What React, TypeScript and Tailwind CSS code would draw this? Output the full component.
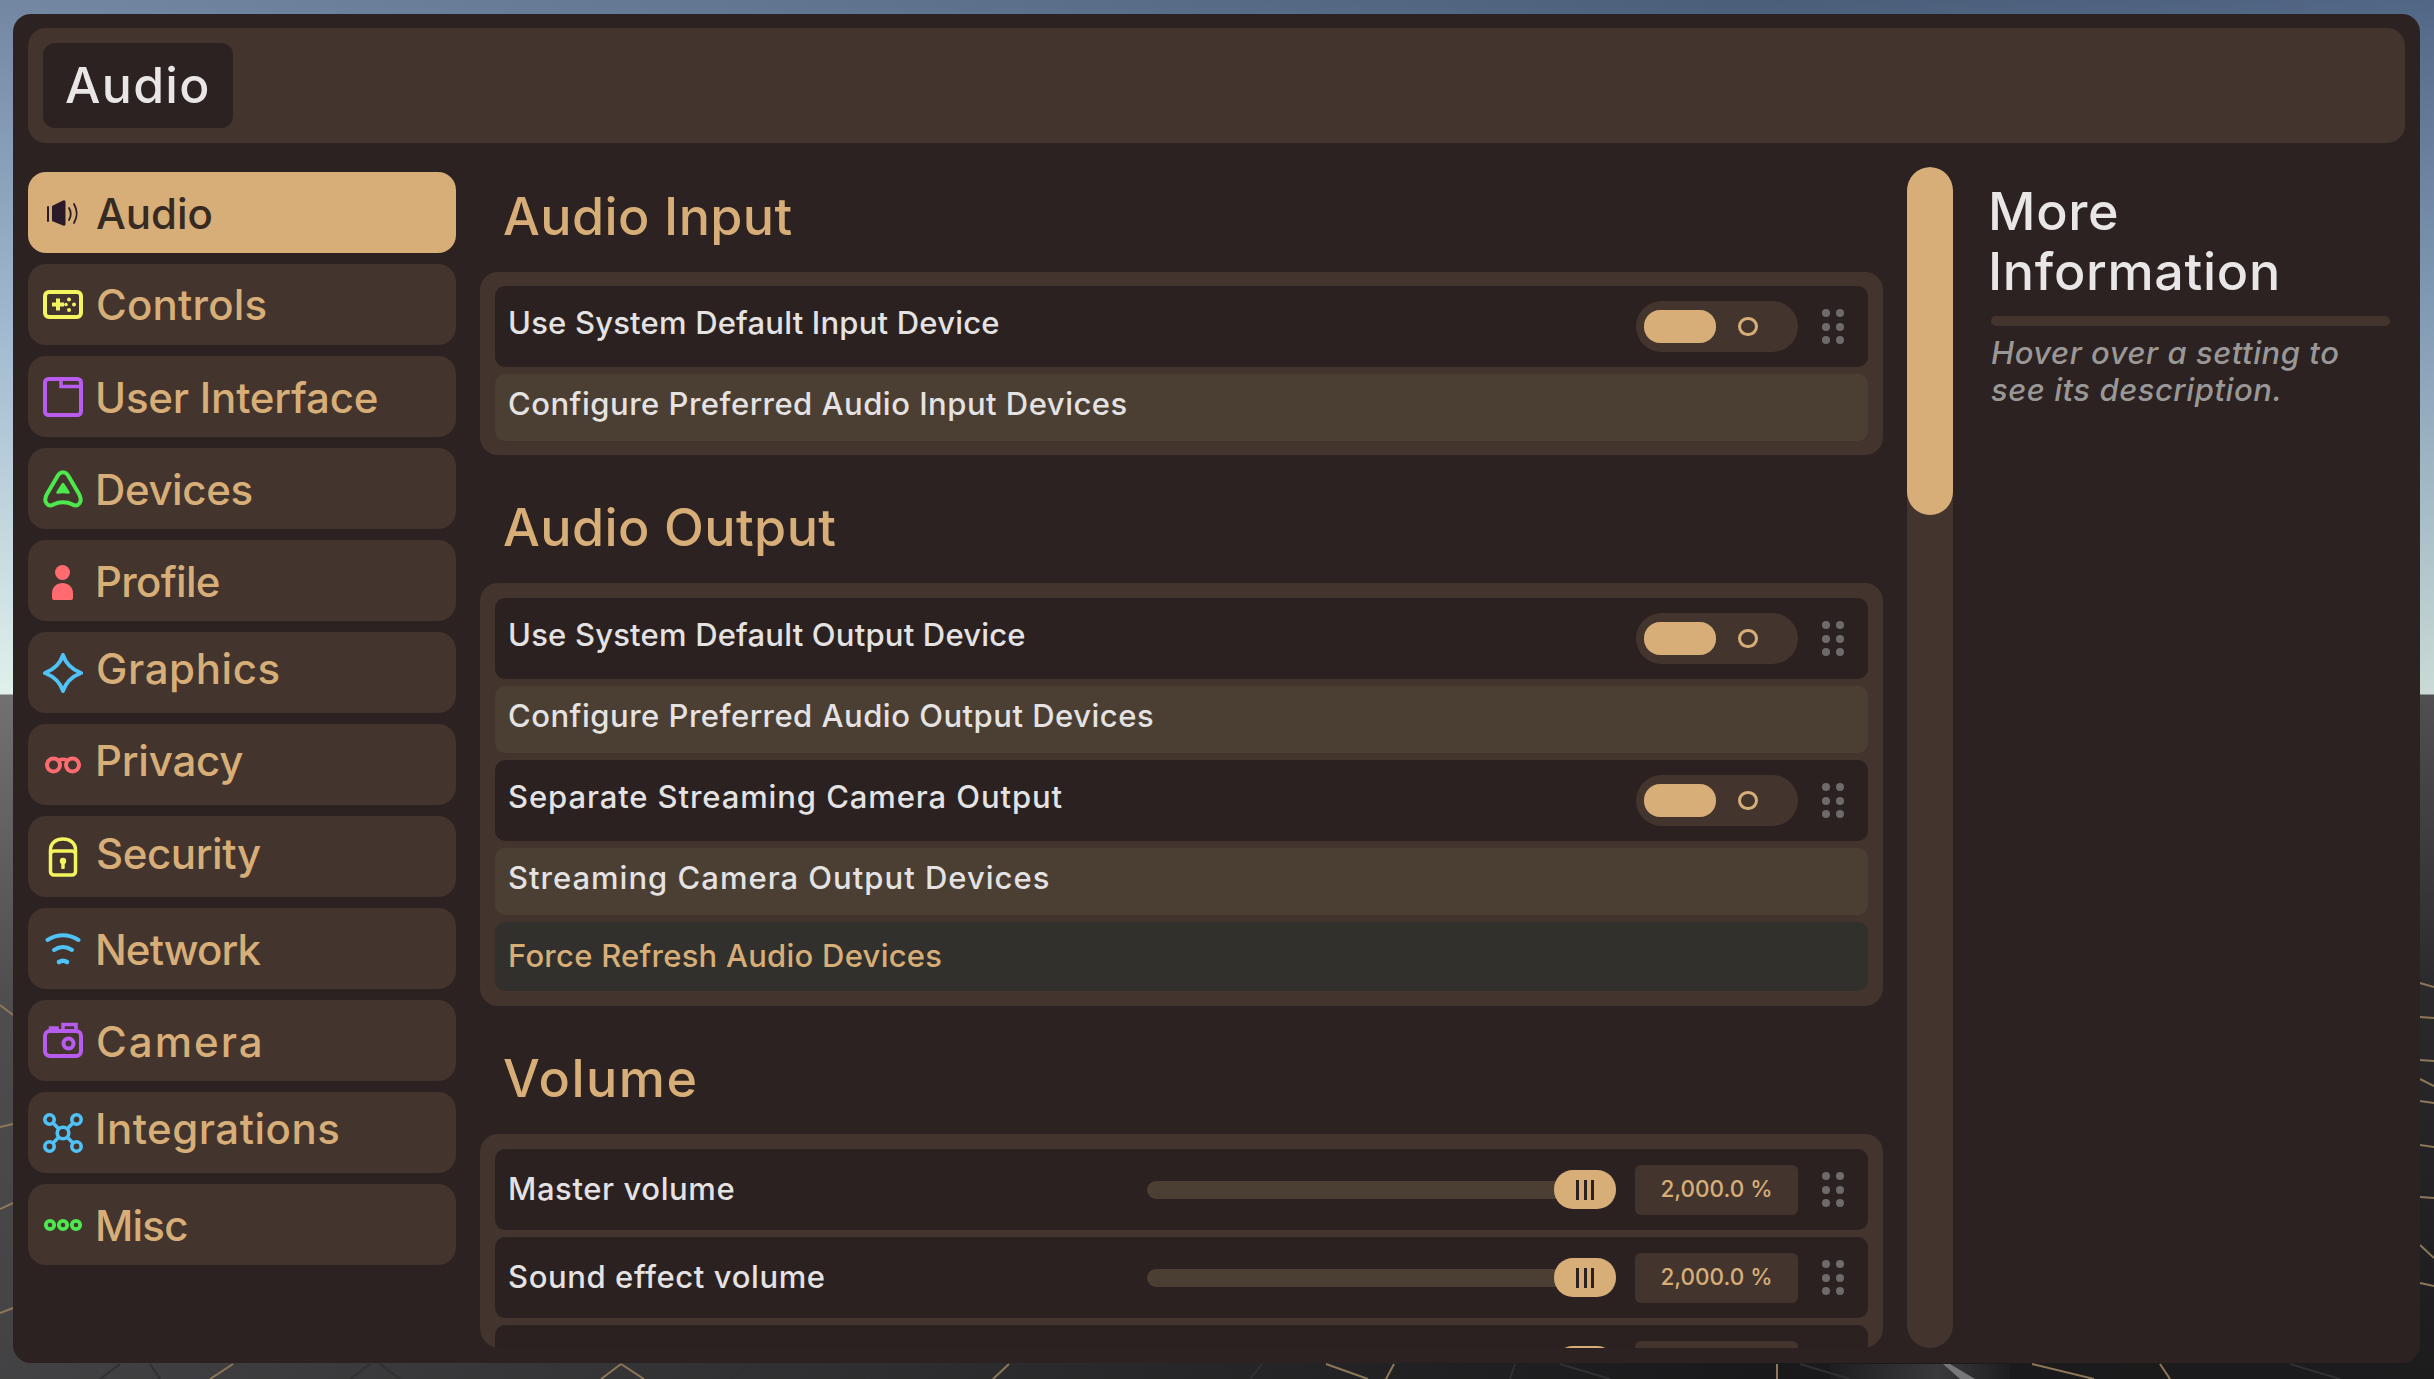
import type { ReactNode } from 'react'

function Speaker() {
  return (
    <svg viewBox="0 0 40 40" className="h-10 w-10 shrink-0" fill="none">
      <rect x="4" y="13" width="2" height="16" rx="1" fill="#2b1a28" />
      <path d="M9 13 L20 7.5 Q22.5 6.5 22.5 9 V31 Q22.5 33.5 20 32.5 L9 28Z" fill="#2b1a28" />
      <path d="M26 15 Q29.5 21 26 27" stroke="#2b1a28" strokeWidth="1.8" strokeLinecap="round" />
      <path d="M31 11 Q36.5 20.5 31 30" stroke="#2b1a28" strokeWidth="1.8" strokeLinecap="round" />
    </svg>
  )
}

function Gamepad() {
  return (
    <svg viewBox="0 0 40 40" className="h-10 w-10 shrink-0" fill="none">
      <rect x="2" y="7" width="36" height="25" rx="4" stroke="#f4f45e" strokeWidth="4" />
      <path d="M15 13.5 V25.5 M9 19.5 H21" stroke="#f4f45e" strokeWidth="4" />
      <circle cx="26" cy="14.5" r="2" fill="#f4f45e" />
      <circle cx="26" cy="25" r="2" fill="#f4f45e" />
      <circle cx="23" cy="19.5" r="1.8" fill="#f4f45e" />
      <circle cx="31" cy="19.5" r="2" fill="#f4f45e" />
    </svg>
  )
}

function WindowIcon() {
  return (
    <svg viewBox="0 0 40 40" className="h-10 w-10 shrink-0" fill="none">
      <rect x="2" y="2" width="36" height="36" rx="3.5" stroke="#b85cf0" strokeWidth="4" />
      <path d="M18 2 V9.5 H38" stroke="#b85cf0" strokeWidth="3.5" />
    </svg>
  )
}

function DevicesIcon() {
  return (
    <svg viewBox="0 0 40 40" className="h-10 w-10 shrink-0" fill="none">
      <path
        d="M14 8 C17 1.5 23 1.5 26 8 L36 25 C40.5 33 35 38.5 29.5 35.5 C24 32.5 16 32.5 10.5 35.5 C5 38.5 -0.5 33 4 25Z"
        stroke="#4de84d"
        strokeWidth="4"
        strokeLinejoin="round"
      />
      <path d="M20 15 L25.5 23.5 Q20 22.5 14.5 23.5Z" fill="#4de84d" stroke="#4de84d" strokeWidth="2.5" strokeLinejoin="round" />
    </svg>
  )
}

function ProfileIcon() {
  return (
    <svg viewBox="0 0 40 40" className="h-10 w-10 shrink-0" fill="#ff6b6e">
      <circle cx="19.5" cy="11.5" r="7.5" />
      <path d="M9 37 V32 C9 26 14 22 19.5 22 C25 22 30 26 30 32 V37 Q30 39 28 39 H11 Q9 39 9 37Z" />
    </svg>
  )
}

function SparkIcon() {
  return (
    <svg viewBox="0 0 40 40" className="h-10 w-10 shrink-0" fill="none">
      <path
        d="M20 2 Q24 14.5 38 20 Q24 25.5 20 38 Q16 25.5 2 20 Q16 14.5 20 2Z"
        stroke="#4fc3f7"
        strokeWidth="4"
        strokeLinejoin="round"
      />
    </svg>
  )
}

function GlassesIcon() {
  return (
    <svg viewBox="0 0 40 40" className="h-10 w-10 shrink-0" fill="none">
      <circle cx="10.5" cy="20" r="6.5" stroke="#ff6b6e" strokeWidth="4" />
      <circle cx="29.5" cy="20" r="6.5" stroke="#ff6b6e" strokeWidth="4" />
      <path d="M15 15.5 Q20 13 25 15.5" stroke="#ff6b6e" strokeWidth="3.5" />
    </svg>
  )
}

function LockIcon() {
  return (
    <svg viewBox="0 0 40 40" className="h-10 w-10 shrink-0" fill="none">
      <rect x="7.5" y="14" width="25" height="24" rx="3.5" stroke="#f4f45e" strokeWidth="3.5" />
      <path d="M7.5 17 V13 C7.5 6 13 2 20 2 C27 2 32.5 6 32.5 13 V17" stroke="#f4f45e" strokeWidth="3.5" />
      <circle cx="20" cy="24" r="3.2" fill="#f4f45e" />
      <rect x="18.25" y="24" width="3.5" height="8" rx="1" fill="#f4f45e" />
    </svg>
  )
}

function WifiIcon() {
  return (
    <svg viewBox="0 0 40 40" className="h-10 w-10 shrink-0" fill="none" stroke="#4fc3f7" strokeLinecap="round" strokeWidth="4">
      <path d="M4.5 11 Q20 1.5 35.5 11" />
      <path d="M11 21 Q20 15 29 21" />
      <path d="M16 33 Q20 30.5 24 33" strokeWidth="4.5" />
    </svg>
  )
}

function CameraIcon() {
  return (
    <svg viewBox="0 0 40 40" className="h-10 w-10 shrink-0" fill="none" stroke="#b85cf0">
      <rect x="2" y="10" width="36" height="25" rx="5" strokeWidth="4" />
      <path d="M7.5 9 V7 H14 V9" strokeWidth="3.5" />
      <path d="M20 8 V3.5 H33 V8" strokeWidth="3.5" />
      <circle cx="25.5" cy="22.5" r="5" strokeWidth="4" />
    </svg>
  )
}

function NodesIcon() {
  return (
    <svg viewBox="0 0 40 40" className="h-10 w-10 shrink-0" fill="none" stroke="#4fc3f7" strokeWidth="3.6">
      <circle cx="6.5" cy="6.5" r="4.7" />
      <circle cx="33.5" cy="6.5" r="4.7" />
      <circle cx="6.5" cy="33.5" r="4.7" />
      <circle cx="33.5" cy="33.5" r="4.7" />
      <circle cx="20" cy="20" r="5.8" />
      <path d="M10 10 L15.5 15.5 M30 10 L24.5 15.5 M10 30 L15.5 24.5 M30 30 L24.5 24.5" />
    </svg>
  )
}

function MiscIcon() {
  return (
    <svg viewBox="0 0 40 40" className="h-10 w-10 shrink-0" fill="none" stroke="#4de84d" strokeWidth="3.8">
      <circle cx="7" cy="20" r="4.2" />
      <circle cx="20" cy="20" r="4.2" />
      <circle cx="33" cy="20" r="4.2" />
    </svg>
  )
}

// shift and tracking keep each label on the baseline and width of the original font
const categories: { label: string; icon: ReactNode; shift: string }[] = [
  { label: 'Audio', icon: <Speaker />, shift: 'mt-[3px]' },
  { label: 'Controls', icon: <Gamepad />, shift: 'mt-[1px] tracking-[0.2px]' },
  { label: 'User Interface', icon: <WindowIcon />, shift: 'mt-[3px] -ml-px tracking-[-0.2px]' },
  { label: 'Devices', icon: <DevicesIcon />, shift: 'mt-[3px] -ml-px tracking-[-0.4px]' },
  { label: 'Profile', icon: <ProfileIcon />, shift: 'mt-[3px] -ml-px tracking-[-0.7px]' },
  { label: 'Graphics', icon: <SparkIcon />, shift: 'mb-[7px] tracking-[0.6px]' },
  { label: 'Privacy', icon: <GlassesIcon />, shift: 'mb-[7px] -ml-px tracking-[-0.2px]' },
  { label: 'Security', icon: <LockIcon />, shift: 'mb-[5px] tracking-[-0.4px]' },
  { label: 'Network', icon: <WifiIcon />, shift: 'mt-[3px] -ml-px tracking-[-0.9px]' },
  { label: 'Camera', icon: <CameraIcon />, shift: 'mt-[2px] tracking-[2px]' },
  { label: 'Integrations', icon: <NodesIcon />, shift: 'mb-[7px] -ml-px tracking-[0.5px]' },
  { label: 'Misc', icon: <MiscIcon />, shift: 'mt-[3px] -ml-px tracking-[-0.8px]' },
]

function Backdrop() {
  // ground lines that show in the margin around the window
  const bright = [
    [233, 1364, 210, 1379],
    [621, 1364, 601, 1379],
    [621, 1364, 644, 1379],
    [1009, 1364, 993, 1379],
    [1326, 1364, 1368, 1379],
    [1394, 1364, 1386, 1379],
    [1777, 1364, 1777, 1379],
    [2032, 1364, 2094, 1379],
    [2160, 1364, 2170, 1379],
    [2420, 983, 2434, 987],
    [2420, 1017, 2434, 1018],
    [2420, 1060, 2434, 1061],
    [2420, 1079, 2434, 1086],
    [2420, 1101, 2434, 1103],
    [2420, 1145, 2434, 1147],
    [2420, 1197, 2434, 1198],
    [2420, 1245, 2434, 1258],
    [2420, 1283, 2434, 1286],
    [0, 1005, 13, 1015],
    [0, 1127, 13, 1124],
    [0, 1209, 13, 1203],
    [0, 1313, 13, 1308],
  ]
  const faint = [
    [100, 1379, 120, 1364],
    [160, 1379, 150, 1364],
    [350, 1379, 370, 1364],
    [400, 1379, 380, 1364],
    [730, 1379, 750, 1364],
    [870, 1379, 850, 1364],
    [1250, 1379, 1262, 1364],
    [1510, 1379, 1515, 1364],
    [1560, 1364, 1610, 1379],
    [1800, 1364, 1850, 1379],
    [2290, 1364, 2340, 1379],
  ]
  return (
    <svg className="absolute inset-0 h-full w-full" viewBox="0 0 2434 1379" fill="none">
      <defs>
        <linearGradient id="glint" x1="0" x2="1" y1="0" y2="0">
          <stop offset="0" stopColor="#1e1e20" />
          <stop offset="0.6" stopColor="#3a3a3c" />
          <stop offset="1" stopColor="#1e1e20" />
        </linearGradient>
      </defs>
      <rect x="1830" y="1364" width="180" height="15" fill="url(#glint)" />
      <path d="M1943 1364 L1950 1364 L1975 1379 L1960 1379Z" fill="#77777a" />
      {bright.map((l, i) => (
        <line key={i} x1={l[0]} y1={l[1]} x2={l[2]} y2={l[3]} stroke="#8d7757" strokeWidth="2" />
      ))}
      {faint.map((l, i) => (
        <line key={i} x1={l[0]} y1={l[1]} x2={l[2]} y2={l[3]} stroke="#303033" strokeWidth="2" />
      ))}
    </svg>
  )
}

function Grip() {
  return (
    <div className="grid w-[22px] shrink-0 grid-cols-2 gap-x-[6px] gap-y-[5.5px]">
      {[0, 1, 2, 3, 4, 5].map((n) => (
        <span key={n} className="h-2 w-2 rounded-full bg-[#6d6b6b]" />
      ))}
    </div>
  )
}

function Toggle() {
  return (
    <div className="flex h-[51px] w-[162px] shrink-0 items-center rounded-[26px] bg-[#43352e] pl-2">
      <span className="h-[33px] w-[72px] rounded-[16px] bg-[#d7ae78]" />
      <span className="ml-[22px] h-[19px] w-[20px] rounded-full border-[3px] border-[#d7ae78]" />
    </div>
  )
}

function ToggleRow({ label, tracking }: { label: string; tracking: string }) {
  return (
    <div className="flex h-[81px] items-center rounded-[10px] bg-[#2a2120] pr-6 pl-[13px]">
      <span className={`mb-[6px] flex-1 text-[31px] font-medium text-[#e4e2e2] ${tracking}`}>{label}</span>
      <Toggle />
      <div className="ml-6">
        <Grip />
      </div>
    </div>
  )
}

function ButtonRow({ label, tracking }: { label: string; tracking: string }) {
  return (
    <div className="flex h-[67px] items-center rounded-[10px] bg-[#4b3f33] pl-[13px]">
      <span className={`mb-[6px] text-[31px] font-medium text-[#e4e2e2] ${tracking}`}>{label}</span>
    </div>
  )
}

function SliderRow({ label, value }: { label: string; value: string }) {
  return (
    <div className="flex h-[81px] shrink-0 items-center rounded-[10px] bg-[#2a2120] pr-6 pl-[13px]">
      <span className="flex-1 text-[31px] font-medium tracking-[0.6px] text-[#e4e2e2]">{label}</span>
      <div className="flex w-[469px] shrink-0 items-center">
        <div className="-mr-[6px] h-[18px] flex-1 rounded-l-[9px] bg-[#4b3f33]" />
        <div className="relative flex h-[39px] w-[62px] items-center justify-center gap-[4.5px] rounded-[19px] bg-[#d7ae78]">
          <span className="h-5 w-[3px] bg-[#2b2120]" />
          <span className="h-5 w-[3px] bg-[#2b2120]" />
          <span className="h-5 w-[3px] bg-[#2b2120]" />
        </div>
      </div>
      <div className="ml-[19px] flex h-[50px] w-[163px] shrink-0 items-center justify-center rounded-[6px] bg-[#43352e] pb-[2px] text-[22.5px] font-medium text-[#d7ae78]">
        {value}
      </div>
      <div className="ml-6">
        <Grip />
      </div>
    </div>
  )
}

function SectionHeading({ children, tracking }: { children: ReactNode; tracking: string }) {
  return (
    <h2 className={`flex h-[128px] shrink-0 items-center pt-[18px] pl-[23px] text-[52px] font-medium text-[#d7ae78] ${tracking}`}>
      {children}
    </h2>
  )
}

export default function App() {
  return (
    <div className="relative flex h-screen w-full overflow-hidden bg-[linear-gradient(90deg,rgba(255,255,255,0.16),rgba(0,0,0,0.16)_72%,rgba(0,0,0,0.08)),linear-gradient(180deg,#586f90_0px,#8eaac6_320px,#dbeee8_694px,#565656_695px,#2c2c2e_1000px,#1e1e20_1379px)] pt-[14px] pr-[14px] pb-[16px] pl-[13px] [font-family:Inter,'Liberation_Sans',sans-serif]">
      <Backdrop />
      <div className="relative flex min-h-0 flex-1 flex-col rounded-[18px] bg-[#2b2221] px-[15px] pt-[14px] pb-[15px]">
        <header className="flex h-[115px] shrink-0 items-center rounded-[18px] bg-[#43352e] px-[15px]">
          <div className="flex h-[85px] w-[190px] items-center rounded-[12px] bg-[#2b2221] pl-[22px] text-[50px] font-medium tracking-[1.3px] text-[#e8e6e6]">
            Audio
          </div>
        </header>

        <div className="flex min-h-0 flex-1">
          <nav className="flex w-[428px] shrink-0 flex-col gap-[11px] pt-[29px]">
            {categories.map((cat, i) => (
              <div
                key={cat.label}
                className={`flex h-[81px] items-center gap-[13px] rounded-[18px] pl-[15px] ${
                  i === 0 ? 'bg-[#d7ae78] text-[#362a22]' : 'bg-[#43352e] text-[#d7ae78]'
                }`}
              >
                {cat.icon}
                <span className={`text-[42px] leading-none font-medium ${cat.shift}`}>{cat.label}</span>
              </div>
            ))}
          </nav>

          <main className="ml-6 flex h-full w-[1403px] shrink-0 flex-col overflow-hidden rounded-b-[20px] pt-px">
            <SectionHeading tracking="tracking-[0.4px]">Audio Input</SectionHeading>
            <section className="flex shrink-0 flex-col gap-[7px] rounded-[18px] bg-[#43352e] px-[15px] py-[14px]">
              <ToggleRow label="Use System Default Input Device" tracking="tracking-[0.2px]" />
              <ButtonRow label="Configure Preferred Audio Input Devices" tracking="tracking-[0.5px]" />
            </section>

            <SectionHeading tracking="tracking-[0.4px]">Audio Output</SectionHeading>
            <section className="flex shrink-0 flex-col gap-[7px] rounded-[18px] bg-[#43352e] px-[15px] py-[15px]">
              <ToggleRow label="Use System Default Output Device" tracking="tracking-[0.2px]" />
              <ButtonRow label="Configure Preferred Audio Output Devices" tracking="tracking-[0.5px]" />
              <ToggleRow label="Separate Streaming Camera Output" tracking="tracking-[0.9px]" />
              <ButtonRow label="Streaming Camera Output Devices" tracking="tracking-[1px]" />
              <div className="flex h-[69px] items-center rounded-[10px] bg-[#31302c] pl-[13px] text-[31px] font-medium tracking-[0.25px] text-[#d7ae78]">
                Force Refresh Audio Devices
              </div>
            </section>

            <SectionHeading tracking="tracking-[1.5px]">Volume</SectionHeading>
            <section className="flex shrink-0 flex-col gap-[7px] rounded-t-[18px] bg-[#43352e] px-[15px] pt-[15px] pb-[15px]">
              <SliderRow label="Master volume" value="2,000.0 %" />
              <SliderRow label="Sound effect volume" value="2,000.0 %" />
              <SliderRow label="" value="" />
            </section>
          </main>

          <div className="mt-6 ml-6 w-[46px] shrink-0 overflow-hidden rounded-[23px] bg-[#43352e]">
            <div className="h-[348px] rounded-[23px] bg-[#d7ae78]" />
          </div>

          <aside className="ml-[38px] flex-1 pt-[39px]">
            <h2 className="-ml-[3px] text-[52px] leading-[60px] font-medium tracking-[0.7px] text-[#e8e6e6]">
              More
              <br />
              Information
            </h2>
            <div className="mt-[14px] mr-[15px] h-[10px] rounded-[5px] bg-[#43352e]" />
            <p className="mt-2 text-[31px] leading-[37px] font-medium tracking-[0.55px] text-[#9a9797] italic">
              Hover over a setting to
              <br />
              see its description.
            </p>
          </aside>
        </div>
      </div>
    </div>
  )
}
